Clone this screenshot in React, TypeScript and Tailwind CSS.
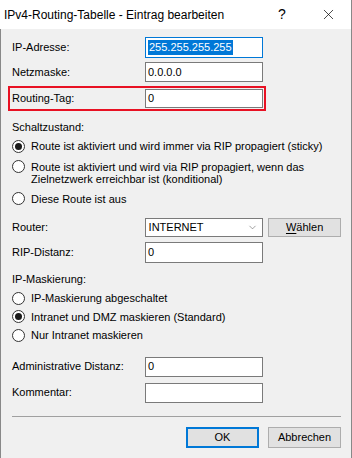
import { X, ChevronDown } from "lucide-react";

const font = { fontFamily: '"Liberation Sans", Arial, sans-serif' };

function Radio({ checked, children }: { checked?: boolean; children: React.ReactNode }) {
  return (
    <div className="flex items-start gap-[6px] text-[11px] leading-[12px] text-black">
      <span className="mt-[-0.5px] flex h-[13px] w-[13px] shrink-0 items-center justify-center rounded-full border border-[#333] bg-white">
        {checked && <span className="h-[7px] w-[7px] rounded-full bg-[#1a1a1a]" />}
      </span>
      <span>{children}</span>
    </div>
  );
}

function Field({ label, value, h = "h-[21px]", focus }: { label: string; value?: string; h?: string; focus?: boolean }) {
  return (
    <div className="flex items-center">
      <span className="w-[133px] text-[11px]">{label}</span>
      <div
        className={`flex w-[118px] items-center border bg-white px-[2px] text-[11px] ${h} ${
          focus ? "border-[#0078d7]" : "border-[#7a7a7a]"
        }`}
      >
        {focus ? <span className="bg-[#0078d7] px-px leading-[15px] text-white">{value}</span> : <span>{value}</span>}
      </div>
    </div>
  );
}

const App: React.FC = () => {
  return (
    <div className="h-[458px] w-[352px] overflow-hidden bg-[#f0f0f0] text-black" style={font}>
      {/* Titelleiste */}
      <div className="flex h-[29px] items-center border-r border-[#888] bg-white pl-[4px]">
        <span className="flex-1 text-[12px]">IPv4-Routing-Tabelle - Eintrag bearbeiten</span>
        <span className="w-[46px] text-center text-[14px]">?</span>
        <span className="flex w-[46px] items-center justify-center">
          <X size={17} strokeWidth={1} />
        </span>
      </div>

      <div className="flex h-[429px] flex-col border-l border-r border-[#888] pl-[11px] pr-[10px]">
        <div className="mt-[8px]">
          <Field label="IP-Adresse:" value="255.255.255.255" focus />
        </div>
        <div className="mt-[4px]">
          <Field label="Netzmaske:" value="0.0.0.0" h="h-[20px]" />
        </div>
        <div className="ml-[-4px] mt-[4px] w-[258px] border-2 border-[#e81123] py-px pl-[2px]">
          <Field label="Routing-Tag:" value="0" h="h-[19px]" />
        </div>

        <div className="mt-[9px] text-[11px] leading-[14px]">Schaltzustand:</div>
        <div className="mt-[6px] flex flex-col gap-[8px]">
          <Radio checked>Route ist aktiviert und wird immer via RIP propagiert (sticky)</Radio>
          <Radio>
            Route ist aktiviert und wird via RIP propagiert, wenn das
            <br />
            Zielnetzwerk erreichbar ist (konditional)
          </Radio>
          <Radio>Diese Route ist aus</Radio>
        </div>

        {/* Router */}
        <div className="mt-[13px] flex items-center">
          <span className="w-[133px] text-[11px]">Router:</span>
          <div className="flex h-[19px] w-[119px] items-center justify-between border border-[#7a7a7a] bg-white pl-[3px] pr-[4px] text-[11px]">
            <span>INTERNET</span>
            <ChevronDown size={11} strokeWidth={1.2} className="text-[#555]" />
          </div>
          <button className="ml-[5px] h-[19px] w-[73px] border border-[#adadad] bg-[#e1e1e1] text-[11px]">
            <span className="underline underline-offset-2">W</span>ählen
          </button>
        </div>
        <div className="mt-[5px]">
          <Field label="RIP-Distanz:" value="0" />
        </div>

        <div className="mt-[9px] text-[11px] leading-[14px]">IP-Maskierung:</div>
        <div className="mt-[6px] flex flex-col gap-[6px]">
          <Radio>IP-Maskierung abgeschaltet</Radio>
          <Radio checked>Intranet und DMZ maskieren (Standard)</Radio>
          <Radio>Nur Intranet maskieren</Radio>
        </div>

        <div className="mt-[15px]">
          <Field label="Administrative Distanz:" value="0" h="h-[20px]" />
        </div>
        <div className="mt-[6px]">
          <Field label="Kommentar:" value="" h="h-[20px]" />
        </div>

        <div className="mt-[13px] border-t border-[#a0a0a0]" />

        <div className="mt-[10px] flex justify-end gap-[9px]">
          <button className="h-[21px] w-[73px] border-2 border-[#0078d7] bg-[#e1e1e1] text-[11px]">OK</button>
          <button className="h-[21px] w-[73px] border border-[#adadad] bg-[#e1e1e1] text-[11px]">Abbrechen</button>
        </div>
      </div>
    </div>
  );
};

export default App;
